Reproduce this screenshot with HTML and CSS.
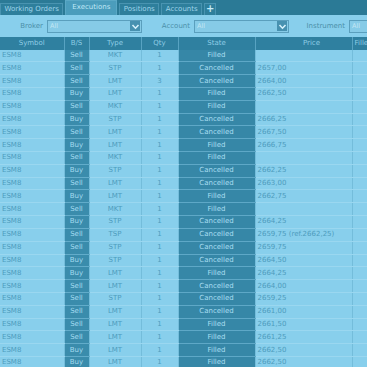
FILE: index.html
```html
<!DOCTYPE html>
<html>
<head>
  <title>Executions</title>
  <link rel="stylesheet" href="styles.css">
</head>
<body>
  <div class="tabs">
    <div class="tab">Working Orders</div>
    <div class="tab active">Executions</div>
    <div class="tab">Positions</div>
    <div class="tab">Accounts</div>
    <div class="tab add">+</div>
  </div>

  <div class="filters">
    <label class="lbl lbl-broker">Broker</label>
    <div class="select"><span>All</span><span class="arrow"><svg width="9" height="9" viewBox="0 0 9 9"><path d="M1.5 3 L4.5 6.2 L7.5 3" fill="none" stroke="#d6f1fb" stroke-width="1.6"/></svg></span></div>
    <label class="lbl lbl-account">Account</label>
    <div class="select"><span>All</span><span class="arrow"><svg width="9" height="9" viewBox="0 0 9 9"><path d="M1.5 3 L4.5 6.2 L7.5 3" fill="none" stroke="#d6f1fb" stroke-width="1.6"/></svg></span></div>
    <label class="lbl lbl-instrument">Instrument</label>
    <div class="select"><span>All</span><span class="arrow"><svg width="9" height="9" viewBox="0 0 9 9"><path d="M1.5 3 L4.5 6.2 L7.5 3" fill="none" stroke="#d6f1fb" stroke-width="1.6"/></svg></span></div>
  </div>

  <table id="execTable">
    <colgroup>
      <col class="c-symbol"><col class="c-side"><col class="c-type"><col class="c-qty">
      <col class="c-state"><col class="c-price"><col class="c-filled">
    </colgroup>
    <thead>
      <tr><th>Symbol</th><th>B/S</th><th>Type</th><th>Qty</th><th>State</th><th class="th-price">Price</th><th class="th-filled">Filled</th></tr>
    </thead>
    <tbody></tbody>
  </table>

  <script>
    const rows = [
      ['Sell','MKT',1,'Filled',''],
      ['Sell','STP',1,'Cancelled','2657,00'],
      ['Sell','LMT',3,'Cancelled','2664,00'],
      ['Buy','LMT',1,'Filled','2662,50'],
      ['Sell','MKT',1,'Filled',''],
      ['Buy','STP',1,'Cancelled','2666,25'],
      ['Sell','LMT',1,'Cancelled','2667,50'],
      ['Buy','LMT',1,'Filled','2666,75'],
      ['Sell','MKT',1,'Filled',''],
      ['Buy','STP',1,'Cancelled','2662,25'],
      ['Sell','LMT',1,'Cancelled','2663,00'],
      ['Buy','LMT',1,'Filled','2662,75'],
      ['Sell','MKT',1,'Filled',''],
      ['Buy','STP',1,'Cancelled','2664,25'],
      ['Sell','TSP',1,'Cancelled','2659,75 (ref.2662,25)'],
      ['Sell','STP',1,'Cancelled','2659,75'],
      ['Buy','STP',1,'Cancelled','2664,50'],
      ['Buy','LMT',1,'Filled','2664,25'],
      ['Sell','LMT',1,'Cancelled','2664,00'],
      ['Sell','STP',1,'Cancelled','2659,25'],
      ['Sell','LMT',1,'Cancelled','2661,00'],
      ['Sell','LMT',1,'Filled','2661,50'],
      ['Sell','LMT',1,'Filled','2661,25'],
      ['Buy','LMT',1,'Filled','2662,50'],
      ['Buy','LMT',1,'Filled','2662,50']
    ];

    const tbody = document.querySelector('#execTable tbody');
    rows.forEach(r => {
      const tr = document.createElement('tr');
      tr.innerHTML = `
        <td class="symbol">ESM8</td>
        <td class="side">${r[0]}</td>
        <td class="center">${r[1]}</td>
        <td class="center">${r[2]}</td>
        <td class="state">${r[3]}</td>
        <td class="price">${r[4]}</td>
        <td></td>
      `;
      tbody.appendChild(tr);
    });
  </script>
</body>
</html>
```

FILE: styles.css
```css
body {
  margin: 0;
  width: 367px;
  height: 367px;
  overflow: hidden;
  background: #88cfec;
  font-family: 'DejaVu Sans', sans-serif;
  font-size: 7px;
}

.tabs {
  display: flex;
  align-items: flex-end;
  gap: 2px;
  height: 15px;
  background: #2b7a96;
}
.tab {
  height: 12px;
  line-height: 11px;
  padding: 0 3.5px;
  box-sizing: border-box;
  border: 1px solid #4994b1;
  border-bottom: none;
  background: #2e7f9c;
  color: #9dd3e9;
  white-space: nowrap;
}
.tab.active {
  height: 15px;
  line-height: 13px;
  padding: 0 6px;
  background: #4b9dbc;
  border-color: #5aa8c5;
  color: #bfe7f6;
}
.tab.add {
  width: 12px;
  padding: 0;
  text-align: center;
  font-size: 10px;
  font-weight: bold;
  line-height: 10px;
  color: #c6ebf8;
}

.filters {
  display: flex;
  align-items: center;
  height: 22px;
  background: #88cfec;
}
.lbl {
  flex-shrink: 0;
  box-sizing: border-box;
  padding-right: 4px;
  text-align: right;
  color: #4c8faa;
}
.lbl-broker { width: 47px; }
.lbl-account { width: 52px; }
.lbl-instrument { width: 60px; }
.select {
  display: flex;
  justify-content: space-between;
  align-items: center;
  width: 95px;
  height: 13px;
  box-sizing: border-box;
  border: 1px solid #5a9fbd;
  background: #86cbe7;
  color: #c4e6f3;
  font-size: 6.5px;
  padding-left: 2px;
  flex-shrink: 0;
}
.arrow {
  display: flex;
  align-items: center;
  justify-content: center;
  width: 10px;
  height: 10px;
  margin-right: 1px;
  background: #4791b0;
}

table {
  border-collapse: collapse;
  table-layout: fixed;
  width: 420px;
}
col.c-symbol { width: 64px; }
col.c-side { width: 25px; }
col.c-type { width: 52px; }
col.c-qty { width: 37px; }
col.c-state { width: 77px; }
col.c-price { width: 97px; }
col.c-filled { width: 68px; }

th {
  height: 12.5px;
  padding: 0;
  background: #2f80a0;
  color: #8ecce5;
  font-weight: normal;
  border-right: 1px solid #58a3c2;
  white-space: nowrap;
}
th.th-price { padding-left: 16px; }
th.th-filled { text-align: left; padding-left: 2px; }

td {
  height: 11.82px;
  padding: 0;
  color: #4d9cbd;
  border-bottom: 1px solid #9ad7f0;
  border-right: 1px solid #74bddb;
  white-space: nowrap;
  overflow: hidden;
  line-height: 11px;
}
td.symbol { padding-left: 2px; }
td.center { text-align: center; }
td.price { padding-left: 2px; }
td.side {
  text-align: center;
  background: #3a8cac;
  color: #a3dbf0;
  border-bottom-color: #62acca;
}
td.state {
  text-align: center;
  background: #3687a7;
  color: #a9def2;
  border-bottom-color: #5ea8c7;
}
```
